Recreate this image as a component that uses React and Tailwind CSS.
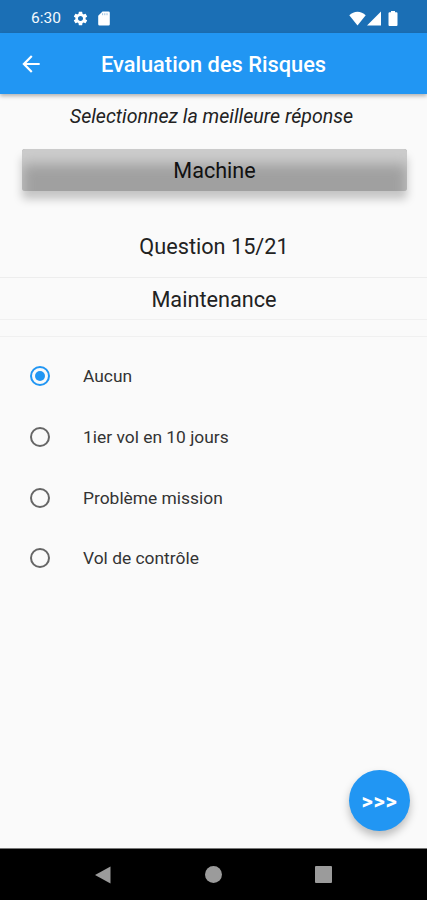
import React, { useState } from 'react';
import { MdArrowBack, MdSettings } from 'react-icons/md';

const answers = ['Aucun', '1ier vol en 10 jours', 'Problème mission', 'Vol de contrôle'];

const StatusBar = () => (
  <div className="flex h-[33px] shrink-0 items-center bg-[#1b6fb5] pt-[3px] pr-[29px] pl-[31px] text-white">
    <span className="w-[41px] pt-px text-[15.5px] leading-none text-[#f4f9fd]">6:30</span>
    <MdSettings className="h-[17px] w-[17px]" />
    <svg className="ml-[9px] h-[15px] w-[12px]" viewBox="0 0 12 15" fill="currentColor">
      <path d="M4.5 0.5h6A1.3 1.3 0 0 1 11.8 1.8v11.4a1.3 1.3 0 0 1-1.3 1.3h-9A1.3 1.3 0 0 1 .2 13.2V4.8z" />
      <path d="M4.6 2.2v2M6.8 2.2v2M9 2.2v2" stroke="#8fbbe0" strokeWidth="0.9" />
    </svg>
    <div className="ml-auto flex items-center">
      <svg className="h-[15px] w-[17px]" viewBox="0 0 17 15" fill="currentColor">
        <path d="M8.5 14.5L0.3 4.2C2.7 2 5.4 0.7 8.5 0.7s5.8 1.3 8.2 3.5z" />
      </svg>
      <svg className="ml-[1px] h-[15px] w-[14px]" viewBox="0 0 14 15" fill="currentColor">
        <path d="M14 0.5v14H0z" />
      </svg>
      <svg className="ml-[7px] h-[15px] w-[10px]" viewBox="0 0 10 15" fill="currentColor">
        <path d="M3 0h4v1.3h1.5a1 1 0 0 1 1 1V14a1 1 0 0 1-1 1h-7a1 1 0 0 1-1-1V2.3a1 1 0 0 1 1-1H3z" />
      </svg>
    </div>
  </div>
);

const AnswerRow = ({ label, checked, onSelect }) => (
  <button type="button" role="radio" aria-checked={checked} onClick={onSelect} className="flex h-[60.7px] w-full items-center pl-[29.5px] text-left">
    {checked ? (
      <span className="flex h-5 w-5 items-center justify-center rounded-full border-2 border-[#2196f3]">
        <span className="h-[10px] w-[10px] rounded-full bg-[#2196f3]" />
      </span>
    ) : (
      <span className="h-5 w-5 rounded-full border-2 border-[#666666]" />
    )}
    <span className="ml-[33.5px] text-[17.4px] text-[#333333]">{label}</span>
  </button>
);

const App = () => {
  const [selected, setSelected] = useState(0);

  return (
    <div className="relative flex h-[900px] w-[427px] flex-col overflow-hidden bg-[#fafafa] font-['Roboto',sans-serif] text-[#222222]">
      <StatusBar />
      <header className="z-10 flex h-[61px] shrink-0 items-center bg-[#2196f3] pl-[18px] text-white shadow-[0_2px_4px_rgba(0,0,0,0.3)]">
        <MdArrowBack className="h-[26px] w-[26px]" />
        <h1 className="ml-[57px] pt-[4px] text-[21.8px] font-medium whitespace-nowrap">Evaluation des Risques</h1>
      </header>

      <main className="flex flex-1 flex-col">
        <p className="h-[55px] pt-[7px] pr-[4px] text-center text-[19.6px] leading-[31px] italic">Selectionnez la meilleure réponse</p>
        <div className="mr-[20px] ml-[22px] flex h-[42px] items-center justify-center rounded-[3px] bg-[#a0a0a0] pt-[3px] text-[21.6px] text-[#111111] shadow-[0_8px_10px_rgba(0,0,0,0.22),inset_0_15px_13px_#cccccc]">
          Machine
        </div>
        <div className="flex h-[87px] items-center justify-center border-b border-[#ededed] pt-[26px] pl-px text-[21.7px]">Question 15/21</div>
        <div className="flex h-[42px] items-center justify-center border-b border-[#f0f0f0] pt-[4px] pl-px text-[21.7px]">Maintenance</div>
        <div className="h-[17px] border-b border-[#f0f0f0]" />
        <div role="radiogroup" className="pt-[9px]">
          {answers.map((label, index) => (
            <AnswerRow key={label} label={label} checked={selected === index} onSelect={() => setSelected(index)} />
          ))}
        </div>
      </main>

      <button
        type="button"
        className="absolute right-[17px] bottom-[69px] flex h-[61px] w-[61px] items-center justify-center rounded-full bg-[#2196f3] pt-[2px] text-[22px] font-bold tracking-[0.7px] text-white shadow-[0_5px_8px_rgba(0,0,0,0.25)]"
      >
        &gt;&gt;&gt;
      </button>

      <nav className="flex h-[52px] shrink-0 items-center border-t border-[#777777] bg-black pl-[95px] text-[#9b9b9b]">
        <svg className="h-[18px] w-[16px]" viewBox="0 0 16 18" fill="currentColor">
          <path d="M15.5 0.5v17L0 9z" />
        </svg>
        <span className="ml-[94px] h-[17px] w-[17px] rounded-full bg-[#9b9b9b]" />
        <span className="ml-[93px] h-[17px] w-[17px] rounded-[1px] bg-[#9b9b9b]" />
      </nav>
    </div>
  );
};

export default App;
